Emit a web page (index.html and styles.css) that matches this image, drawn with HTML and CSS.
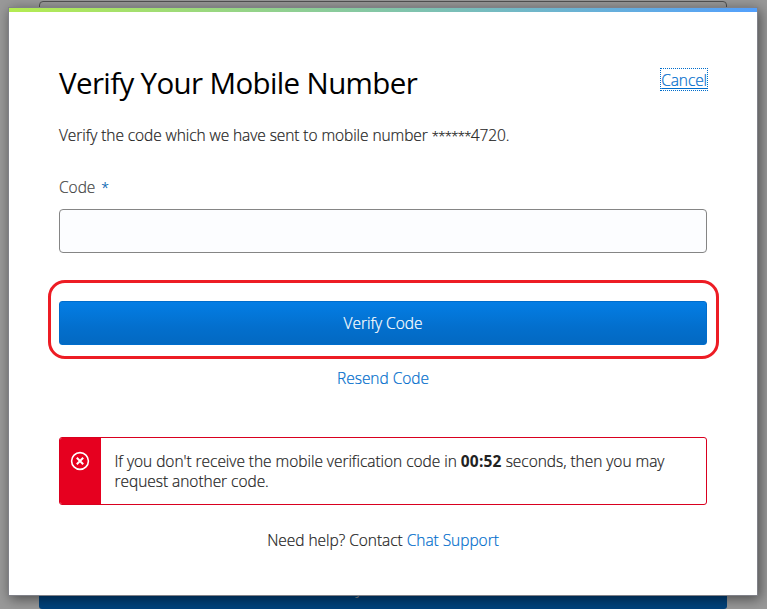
FILE: index.html
```html
<!DOCTYPE html>
<html lang="en">
<head>
<meta charset="utf-8">
<title>Verify Your Mobile Number</title>
<link rel="stylesheet" href="styles.css">
</head>
<body>
<div class="page">
  <div class="page-field"></div>
  <div class="page-button"><span class="page-button-text">y</span></div>
</div>
<main class="modal">
  <div class="accent"></div>
  <div class="content">
    <header class="header">
      <h1 class="title">Verify Your Mobile Number</h1>
      <a class="cancel" href="#">Cancel</a>
    </header>
    <p class="intro">Verify the code which we have sent to mobile number <span class="mask">******</span>4720.</p>
    <label class="label" for="code">Code <span class="required">*</span></label>
    <input class="input" id="code" type="text">
    <div class="highlight">
      <button class="verify" type="button">Verify Code</button>
    </div>
    <a class="resend" href="#">Resend Code</a>
    <section class="alert">
      <div class="alert-side">
        <svg class="alert-icon" viewBox="0 0 20 20" width="20" height="20" fill="none" stroke="#fff">
          <circle cx="10" cy="10" r="8.4" stroke-width="1.6"/>
          <path d="M6.8 6.8l6.4 6.4M13.2 6.8l-6.4 6.4" stroke-width="2"/>
        </svg>
      </div>
      <p class="alert-text">If you don't receive the mobile verification code in <b>00:52</b> seconds, then you may<br>request another code.</p>
    </section>
    <p class="help">Need help? Contact <a href="#">Chat Support</a></p>
  </div>
</main>
</body>
</html>
```
FILE: styles.css
```css
* { box-sizing: border-box; }
html, body { margin: 0; height: 100%; overflow: hidden; }
body {
  background: #999;
  color: #222;
  font: 300 15.5px/20px "Open Sans", "Noto Sans", sans-serif;
  letter-spacing: -0.04px;
  -webkit-text-stroke: 0.2px;
  padding: 7px 0 0 8px;
}
h1, p { margin: 0; font-weight: inherit; }
a { color: #006dcc; text-decoration: none; }

.page {
  position: absolute;
  inset: 0;
  z-index: -1;
  display: flex;
  flex-direction: column;
  justify-content: space-between;
  padding: 1px 40px 0 39px;
  overflow: hidden;
}
.page-field { height: 44px; border: 1px solid #515151; border-radius: 4px; }
.page-button {
  height: 44px;
  background: #00427c;
  border-radius: 3px;
  color: #999;
  text-align: center;
  padding: 13px 48px 0 0;
}

.modal {
  width: 750px;
  height: 589px;
  background: #fff;
  border: 1px solid #808188;
  box-shadow: 2px 3px 12px rgba(0, 0, 0, .5);
}
.accent { height: 4px; background: linear-gradient(90deg, #b4ec51, #53a0fd); }
.content { display: flex; flex-direction: column; padding: 48px 50px 0; }
.header { display: flex; justify-content: space-between; align-items: flex-start; height: 65px; padding-top: 8px; }
.title {
  font-size: 29.5px;
  line-height: 30px;
  font-weight: 400;
  letter-spacing: -0.63px;
  -webkit-text-stroke: 0;
  color: #000;
}
.cancel {
  height: 21px;
  margin: 1px 0 0;
  line-height: 23px;
  letter-spacing: -0.1px;
  outline: 1px dotted #006dcc;
  text-decoration: underline;
  text-decoration-thickness: 1px;
  text-underline-offset: 2px;
  text-decoration-skip-ink: none;
}
.intro { height: 52px; letter-spacing: -0.08px; }
.mask { font-size: 13px; letter-spacing: -0.65px; }
.label { height: 32px; color: #444; }
.required { color: #0061b0; font-size: 14px; margin-left: 2px; }
.input {
  height: 44px;
  width: 100%;
  border: 1px solid #858585;
  border-radius: 4px;
  background: #fcfdff;
  font: inherit;
  padding: 0 12px;
}
.highlight {
  margin: 27px -12px 0 -11px;
  padding: 18px 9px 11px 8px;
  border: 3px solid #ed1c24;
  border-radius: 17px;
  height: 79px;
}
.verify {
  display: block;
  width: 100%;
  height: 44px;
  border: 1px solid #006dcc;
  border-radius: 3px;
  background: linear-gradient(#047ee5, #036fcd 60%, #0369c2);
  color: #fff;
  font: inherit;
  letter-spacing: inherit;
  padding: 0;
}
.resend { align-self: center; margin-top: 9px; }
.alert {
  display: flex;
  height: 68px;
  margin-top: 49px;
  border: 1px solid #d9001f;
  border-radius: 3px;
  overflow: hidden;
}
.alert-side { width: 41px; background: #e6001f; padding: 13px 0 0 10px; }
.alert-icon { display: block; }
.alert-text { padding: 13px 0 0 13.5px; white-space: nowrap; }
.alert-text b { font-weight: 700; letter-spacing: 0.2px; -webkit-text-stroke: 0; }
.help { text-align: center; margin-top: 25px; }
```
